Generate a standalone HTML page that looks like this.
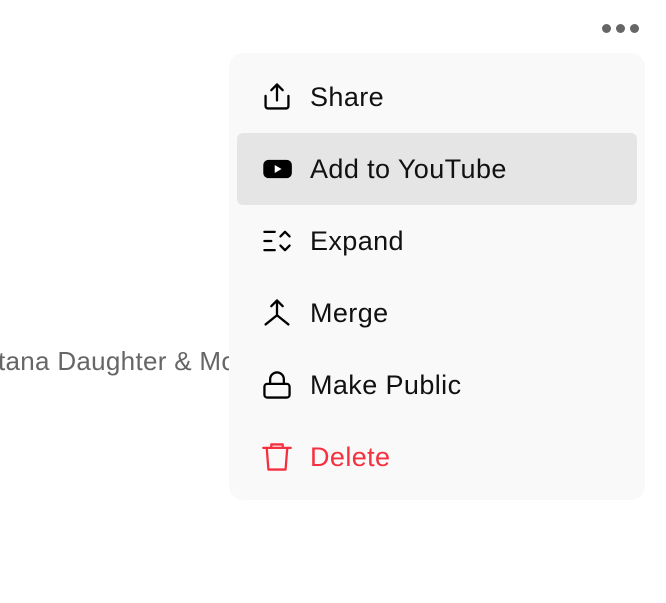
<!DOCTYPE html>
<html><head><style>
body{margin:0;width:666px;height:603px;background:#fff;font-family:"Liberation Sans",sans-serif;position:relative;overflow:hidden}
.dots{position:absolute;top:24px;left:602px}
.dots span{position:absolute;width:9px;height:9px;border-radius:50%;background:#666;top:0}
.bg{position:absolute;left:-2px;top:346px;font-size:26px;color:#666;white-space:nowrap;letter-spacing:0.3px}
.menu{position:absolute;left:229px;top:53px;width:416px;height:447px;background:#f9f9f9;border-radius:14px}
.row{position:absolute;left:8px;width:400px;height:72px;border-radius:6px}
.row.hl{background:#e5e5e5}
.row svg{position:absolute;left:24px;top:20px;width:32px;height:32px}
.row .t{position:absolute;left:73px;top:0;line-height:72px;font-size:27px;color:#111;letter-spacing:0.4px}
.red .t{color:#f5303f}
</style></head><body>
<div class="dots"><span style="left:0"></span><span style="left:14px"></span><span style="left:28px"></span></div>
<div class="bg">tana Daughter &amp; Mom</div>
<div class="menu">
<div class="row" style="top:8px"><svg viewBox="0 0 28 28" fill="none" stroke="#000" stroke-width="2" stroke-linecap="round" stroke-linejoin="round"><path d="M4 13v9a2 2 0 0 0 2 2h16a2 2 0 0 0 2-2v-9"/><path d="M14 3v14M9 8l5-5 5 5"/></svg><div class="t">Share</div></div>
<div class="row hl" style="top:80px"><svg viewBox="0 0 28 28"><rect x="2" y="6" width="25" height="16" rx="4.5" fill="#000"/><path d="M12 10.5v7l6-3.5z" fill="#fff"/></svg><div class="t">Add to YouTube</div></div>
<div class="row" style="top:152px"><svg viewBox="0 0 28 28" fill="none" stroke="#000" stroke-width="2" stroke-linecap="round" stroke-linejoin="round"><path d="M3 6h9M3 14h6M3 22h9M17 10l4-4 4 4M17 18l4 4 4-4"/></svg><div class="t">Expand</div></div>
<div class="row" style="top:224px"><svg viewBox="0 0 28 28" fill="none" stroke="#000" stroke-width="2" stroke-linecap="round" stroke-linejoin="round"><path d="M9 8l5-5 5 5M14 3v13L4 24M14 16l10 8"/></svg><div class="t">Merge</div></div>
<div class="row" style="top:296px"><svg viewBox="0 0 28 28" fill="none" stroke="#000" stroke-width="2" stroke-linecap="round" stroke-linejoin="round"><rect x="3" y="13" width="22" height="12" rx="2.5"/><path d="M8 13V9a6 6 0 0 1 12 0v4"/></svg><div class="t">Make Public</div></div>
<div class="row red" style="top:368px"><svg viewBox="0 0 28 28" fill="none" stroke="#f5303f" stroke-width="2" stroke-linecap="round" stroke-linejoin="round"><path d="M2 6h24M9 6V3h10v3M5 6l1.5 19h15L23 6"/></svg><div class="t">Delete</div></div>
</div>
</body></html>
